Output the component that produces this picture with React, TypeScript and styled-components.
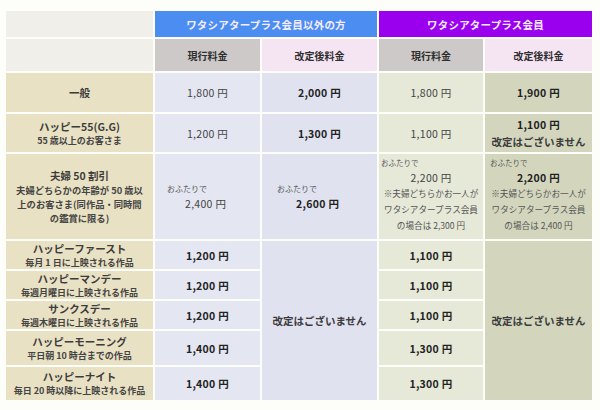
import React from "react";
import styled, { createGlobalStyle } from "styled-components";

const GlobalStyle = createGlobalStyle`
  html, body {
    margin: 0;
    padding: 0;
    background: #fdfdf9;
    font-family: "Noto Sans CJK JP", "Noto Sans", sans-serif;
    color: #3a3a3a;
  }
`;

const Page = styled.div`
  width: 600px;
  height: 410px;
  padding: 11px 0 0 6px;
  box-sizing: border-box;
`;

const Table = styled.div`
  display: grid;
  grid-template-columns: 147px 105px 115px 104px 107px;
  grid-template-rows: 26px 32px 39px 38px 85px 28px 28px 28px 34px 33px;
  gap: 2px;
`;

const tones: Record<string, string> = {
  blank: "#f0efe9",
  label: "#e9e1c3",
  gray: "#ccc9c8",
  pink: "#f5e5f3",
  c1: "#e4e6f1",
  c2: "#e1e2f0",
  c3: "#e6e8d8",
  c4: "#d3d6bd",
};

const Cell = styled.div<{ $tone: string; $span?: number; $gap?: number }>`
  background: ${(p) => tones[p.$tone]};
  grid-row: ${(p) => (p.$span ? `span ${p.$span}` : "auto")};
  display: flex;
  flex-direction: column;
  align-items: center;
  justify-content: center;
  gap: ${(p) => p.$gap ?? 0}px;
  text-align: center;
  min-width: 0;
`;

const GroupHead = styled.div<{ $color: string }>`
  grid-column: span 2;
  background: ${(p) => p.$color};
  color: #f4ecff;
  font-size: 10.5px;
  font-weight: 700;
  display: flex;
  align-items: center;
  justify-content: center;
  letter-spacing: 0.2px;
`;

const HeadText = styled.span`
  font-size: 10px;
  font-weight: 700;
  color: #2e2e2e;
`;

const Title = styled.div`
  font-size: 10.5px;
  font-weight: 700;
  line-height: 14px;
  color: #3c3c3c;
`;

const Sub = styled.div`
  font-size: 9px;
  font-weight: 700;
  line-height: 13px;
  color: #444;
`;

const Desc = styled.div`
  font-size: 9.3px;
  font-weight: 700;
  line-height: 14px;
  color: #444;
`;

const Price = styled.div<{ $bold?: boolean }>`
  font-size: 10.5px;
  line-height: 15px;
  font-weight: ${(p) => (p.$bold ? 700 : 400)};
  color: ${(p) => (p.$bold ? "#222" : "#444")};
  letter-spacing: 0.3px;
`;

const Pair = styled.div<{ $pad: number; $indent: number }>`
  align-self: flex-start;
  padding-left: ${(p) => p.$pad}px;
  text-align: left;

  & > div:last-child {
    padding-left: ${(p) => p.$indent}px;
  }
`;

const Small = styled.div<{ $size?: number }>`
  font-size: ${(p) => p.$size ?? 8}px;
  line-height: 14px;
  color: #555;
`;

const Stack = styled.div`
  width: 100%;
  height: 100%;
  box-sizing: border-box;
  padding: 2px 2px 0;
  display: flex;
  flex-direction: column;
  align-items: center;
`;

const Lead = styled.div<{ $left: number }>`
  align-self: flex-start;
  padding-left: ${(p) => p.$left}px;
  font-size: 7.5px;
  line-height: 14px;
  color: #555;
`;

const Note = styled.div`
  font-size: 8.6px;
  line-height: 16px;
  color: #555;
  white-space: nowrap;
`;

const lowerRows = [
  { title: "ハッピーファースト", sub: "毎月 1 日に上映される作品", c1: "1,200 円", c3: "1,100 円" },
  { title: "ハッピーマンデー", sub: "毎週月曜日に上映される作品", c1: "1,200 円", c3: "1,100 円" },
  { title: "サンクスデー", sub: "毎週木曜日に上映される作品", c1: "1,200 円", c3: "1,100 円" },
  { title: "ハッピーモーニング", sub: "平日朝 10 時台までの作品", c1: "1,400 円", c3: "1,300 円" },
  { title: "ハッピーナイト", sub: "毎日 20 時以降に上映される作品", c1: "1,400 円", c3: "1,300 円" },
];

export default function App() {
  return (
    <Page>
      <GlobalStyle />
      <Table>
        <Cell $tone="blank" />
        <GroupHead $color="#4b8df0">ワタシアタープラス会員以外の方</GroupHead>
        <GroupHead $color="#9a00ee">ワタシアタープラス会員</GroupHead>

        <Cell $tone="blank" />
        <Cell $tone="gray"><HeadText>現行料金</HeadText></Cell>
        <Cell $tone="pink"><HeadText>改定後料金</HeadText></Cell>
        <Cell $tone="gray"><HeadText>現行料金</HeadText></Cell>
        <Cell $tone="pink"><HeadText>改定後料金</HeadText></Cell>

        <Cell $tone="label"><Title>一般</Title></Cell>
        <Cell $tone="c1"><Price>1,800 円</Price></Cell>
        <Cell $tone="c2"><Price $bold>2,000 円</Price></Cell>
        <Cell $tone="c3"><Price>1,800 円</Price></Cell>
        <Cell $tone="c4"><Price $bold>1,900 円</Price></Cell>

        <Cell $tone="label">
          <Title>ハッピー55(G.G)</Title>
          <Sub>55 歳以上のお客さま</Sub>
        </Cell>
        <Cell $tone="c1"><Price>1,200 円</Price></Cell>
        <Cell $tone="c2"><Price $bold>1,300 円</Price></Cell>
        <Cell $tone="c3"><Price>1,100 円</Price></Cell>
        <Cell $tone="c4" $gap={3}>
          <Price $bold>1,100 円</Price>
          <Title>改定はございません</Title>
        </Cell>

        <Cell $tone="label">
          <Title>夫婦 50 割引</Title>
          <Desc>
            夫婦どちらかの年齢が 50 歳以
            <br />
            上のお客さま(同作品・同時間
            <br />
            の鑑賞に限る)
          </Desc>
        </Cell>
        <Cell $tone="c1">
          <Pair $pad={12} $indent={18}>
            <Small>おふたりで</Small>
            <Price>2,400 円</Price>
          </Pair>
        </Cell>
        <Cell $tone="c2">
          <Pair $pad={15} $indent={19}>
            <Small>おふたりで</Small>
            <Price $bold>2,600 円</Price>
          </Pair>
        </Cell>
        <Cell $tone="c3">
          <Stack>
            <Lead $left={0}>おふたりで</Lead>
            <Price>2,200 円</Price>
            <Note>※夫婦どちらかお一人が</Note>
            <Note>ワタシアタープラス会員</Note>
            <Note>の場合は 2,300 円</Note>
          </Stack>
        </Cell>
        <Cell $tone="c4">
          <Stack>
            <Lead $left={3}>おふたりで</Lead>
            <Price $bold>2,200 円</Price>
            <Note>※夫婦どちらかお一人が</Note>
            <Note>ワタシアタープラス会員</Note>
            <Note>の場合は 2,400 円</Note>
          </Stack>
        </Cell>

        {lowerRows.map((r, i) => (
          <React.Fragment key={r.title}>
            <Cell $tone="label">
              <Title>{r.title}</Title>
              <Sub>{r.sub}</Sub>
            </Cell>
            <Cell $tone="c1"><Price $bold>{r.c1}</Price></Cell>
            {i === 0 && (
              <Cell $tone="c2" $span={5}><Title>改定はございません</Title></Cell>
            )}
            <Cell $tone="c3"><Price $bold>{r.c3}</Price></Cell>
            {i === 0 && (
              <Cell $tone="c4" $span={5}><Title>改定はございません</Title></Cell>
            )}
          </React.Fragment>
        ))}
      </Table>
    </Page>
  );
}
